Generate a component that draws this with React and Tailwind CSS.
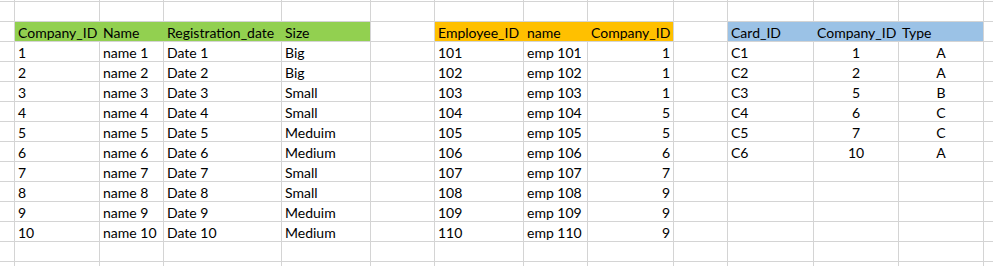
import React from 'react';

// column widths incl. the 1px right gridline
const COLS = [15, 85, 64, 118, 89, 64, 89, 64, 86, 54, 86, 85, 85, 60];

const companies = [
  ['1', 'name 1', 'Date 1', 'Big'],
  ['2', 'name 2', 'Date 2', 'Big'],
  ['3', 'name 3', 'Date 3', 'Small'],
  ['4', 'name 4', 'Date 4', 'Small'],
  ['5', 'name 5', 'Date 5', 'Meduim'],
  ['6', 'name 6', 'Date 6', 'Medium'],
  ['7', 'name 7', 'Date 7', 'Small'],
  ['8', 'name 8', 'Date 8', 'Small'],
  ['9', 'name 9', 'Date 9', 'Meduim'],
  ['10', 'name 10', 'Date 10', 'Medium'],
];

const employeeCompany = [1, 1, 1, 5, 5, 6, 7, 9, 9, 9];

const cards = [
  ['C1', '1', 'A'],
  ['C2', '2', 'A'],
  ['C3', '5', 'B'],
  ['C4', '6', 'C'],
  ['C5', '7', 'C'],
  ['C6', '10', 'A'],
];

const GREEN = 'bg-[#92d050] border-r-[#92d050]';
const ORANGE = 'bg-[#ffc000] border-r-[#ffc000]';
const BLUE = 'bg-[#9bc2e6] border-r-[#9bc2e6]';

function Cell({ w, children, align = 'left', fill = '' }) {
  const alignCls = align === 'right' ? 'justify-end pr-[3px]' : align === 'center' ? 'justify-center' : 'justify-start pl-[3px]';
  return (
    <div
      className={`h-full shrink-0 flex items-end pb-[1px] border-r border-[#d4d4d4] whitespace-nowrap overflow-visible ${alignCls} ${fill}`}
      style={{ width: w }}
    >
      {children}
    </div>
  );
}

function Row({ cells }) {
  return (
    <div className="flex h-[20px] border-b border-[#d4d4d4]">
      {COLS.map((w, i) => {
        const c = cells[i] || {};
        return (
          <Cell key={i} w={w} align={c.align} fill={c.fill}>
            {c.text}
          </Cell>
        );
      })}
    </div>
  );
}

export default function App() {
  const header = {
    1: { text: 'Company_ID', fill: GREEN },
    2: { text: 'Name', fill: GREEN },
    3: { text: 'Registration_date', fill: GREEN },
    4: { text: 'Size', fill: 'bg-[#92d050]' },
    6: { text: 'Employee_ID', fill: ORANGE },
    7: { text: 'name', fill: ORANGE },
    8: { text: 'Company_ID', fill: 'bg-[#ffc000]' },
    10: { text: 'Card_ID', fill: BLUE },
    11: { text: 'Company_ID', fill: BLUE },
    12: { text: 'Type', fill: 'bg-[#9bc2e6]' },
  };

  const dataRows = companies.map((c, i) => {
    const row = {
      1: { text: c[0] },
      2: { text: c[1] },
      3: { text: c[2] },
      4: { text: c[3] },
      6: { text: String(101 + i) },
      7: { text: `emp ${101 + i}` },
      8: { text: String(employeeCompany[i]), align: 'right' },
    };
    if (cards[i]) {
      row[10] = { text: cards[i][0] };
      row[11] = { text: cards[i][1], align: 'center' };
      row[12] = { text: cards[i][2], align: 'center' };
    }
    return row;
  });

  return (
    <div className="w-[993px] h-[266px] overflow-hidden bg-white text-black text-[14px] leading-none font-['Lato','Liberation_Sans',sans-serif]">
      <div className="flex h-[2px] border-b border-[#d4d4d4]">
        {COLS.map((w, i) => (
          <div key={i} className="h-full shrink-0 border-r border-[#d4d4d4]" style={{ width: w }} />
        ))}
      </div>
      <Row cells={{}} />
      <Row cells={header} />
      {dataRows.map((r, i) => (
        <Row key={i} cells={r} />
      ))}
      <Row cells={{}} />
      <Row cells={{}} />
    </div>
  );
}
